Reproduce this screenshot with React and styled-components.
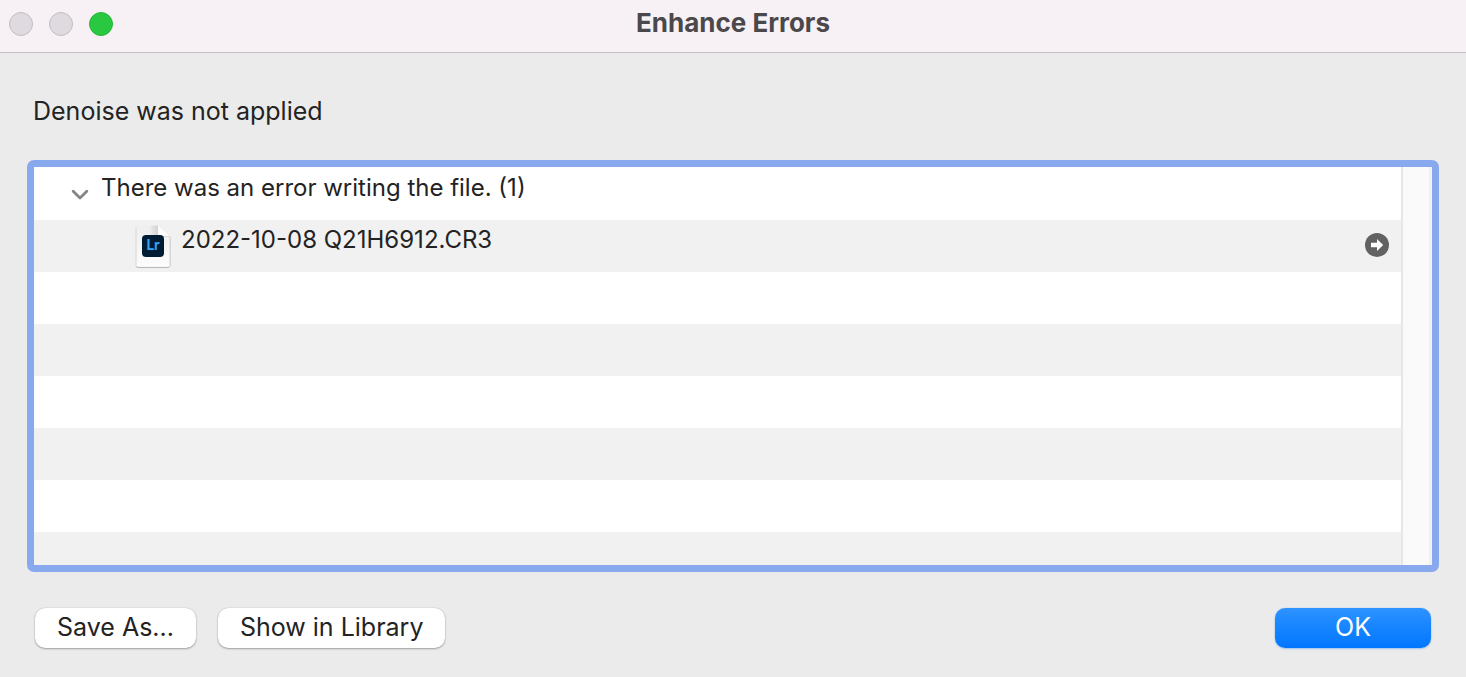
import { useState } from "react";
import styled, { createGlobalStyle } from "styled-components";

const STRIPES = 8;

const errorGroup = {
    message: "There was an error writing the file.",
    files: ["2022-10-08 Q21H6912.CR3"],
};

export default function App() {
    const [open, setOpen] = useState(true);
    const files = open ? errorGroup.files : [];
    const emptyRows = STRIPES - 1 - files.length;

    return (
        <>
            <GlobalStyle />
            <Dialog role="dialog" aria-labelledby="dialog-title">
                <TitleBar>
                    <Lights>
                        <Light type="button" aria-label="Close" disabled />
                        <Light type="button" aria-label="Minimize" disabled />
                        <Light type="button" aria-label="Zoom" $active />
                    </Lights>
                    <Title id="dialog-title">Enhance Errors</Title>
                </TitleBar>
                <Content>
                    <Message>Denoise was not applied</Message>
                    <ListBox>
                        <List>
                            <Row>
                                <Toggle
                                    type="button"
                                    aria-label="Toggle group"
                                    aria-expanded={open}
                                    onClick={() => setOpen(!open)}
                                >
                                    <Chevron $open={open} />
                                </Toggle>
                                <RowText>{errorGroup.message} ({errorGroup.files.length})</RowText>
                            </Row>
                            {files.map((name) => (
                                <FileRow key={name}>
                                    <FileIcon />
                                    <RowText>{name}</RowText>
                                    <Reveal type="button" aria-label="Show file">
                                        <ArrowIcon />
                                    </Reveal>
                                </FileRow>
                            ))}
                            {Array.from({ length: emptyRows }, (_, i) => (
                                <Row key={i} aria-hidden="true" />
                            ))}
                        </List>
                        <ScrollTrack />
                    </ListBox>
                    <Footer>
                        <Button type="button">Save As...</Button>
                        <Button type="button">Show in Library</Button>
                        <PrimaryButton type="button">OK</PrimaryButton>
                    </Footer>
                </Content>
            </Dialog>
        </>
    );
}

function Chevron({ $open }) {
    return (
        <ChevronSvg $open={$open} width="18" height="12" viewBox="0 0 18 12" aria-hidden="true">
            <path d="M2.2 2.2L9 9L15.8 2.2" fill="none" stroke="#858585" strokeWidth="2.8" strokeLinecap="round" strokeLinejoin="round" />
        </ChevronSvg>
    );
}

function FileIcon() {
    return (
        <FileSvg width="36" height="44" viewBox="0 0 36 44" aria-hidden="true">
            <defs>
                <linearGradient id="paper" x1="0" y1="0" x2="0" y2="1">
                    <stop offset="0" stopColor="#eeeeee" />
                    <stop offset="1" stopColor="#fcfcfc" />
                </linearGradient>
                <linearGradient id="shade" x1="0" y1="0" x2="1" y2="0">
                    <stop offset="0" stopColor="#d2d2d2" stopOpacity="0" />
                    <stop offset="1" stopColor="#d2d2d2" />
                </linearGradient>
            </defs>
            <path d="M1 41.5Q1 43.5 3 43.5H33Q35 43.5 35 41.5V13" fill="none" stroke="#b9b9b9" />
            <path d="M1 3Q1 1.5 3 1.5H23L35 12.5V40.5Q35 42.5 33 42.5H3Q1 42.5 1 40.5Z" fill="url(#paper)" />
            <path d="M1 4V41M35 13V41" stroke="#d6d6d6" strokeWidth="1" />
            <path d="M14 1.5H23V11H14Z" fill="url(#shade)" />
            <path d="M23 1.5L34.5 12.5H25Q23 12.5 23 10.5Z" fill="#fcfcfc" />
            <path d="M24 12.5H35" fill="none" stroke="#dadada" strokeWidth="1" />
            <rect x="7" y="11" width="22" height="22" rx="4" fill="#001c33" />
            <text x="18" y="26" textAnchor="middle" fontFamily="Lato, sans-serif" fontSize="15" fontWeight="700" fill="#35a5f8">Lr</text>
        </FileSvg>
    );
}

function ArrowIcon() {
    return (
        <svg width="24" height="24" viewBox="0 0 24 24" aria-hidden="true">
            <circle cx="12" cy="12" r="12" fill="#626262" />
            <path d="M6 9.8H12V6L18.2 12L12 18V14.2H6Z" fill="#ffffff" />
        </svg>
    );
}

const GlobalStyle = createGlobalStyle`
    * {
        box-sizing: border-box;
    }

    body {
        margin: 0;
        background-color: #ebebeb;
        color: #232323;
        font-family: Inter, "Liberation Sans", sans-serif;
    }

    button {
        padding: 0;
        border: 0;
        font-family: inherit;
    }
`;

const Dialog = styled.div`
    display: flex;
    flex-direction: column;
    height: 100vh;
    min-height: 400px;
`;

const TitleBar = styled.header`
    display: grid;
    grid-template-columns: 1fr auto 1fr;
    align-items: start;
    height: 53px;
    padding: 7px 9px 0;
    background-color: #f7f1f6;
    border-bottom: 1px solid #c6c1c5;
`;

const Lights = styled.div`
    display: flex;
    gap: 16px;
    padding-top: 5px;
`;

const Light = styled.button`
    width: 24px;
    height: 24px;
    border-radius: 50%;
    border: 1px solid ${props => props.$active ? "#25b83a" : "#c3bec2"};
    background-color: ${props => props.$active ? "#29c840" : "#dfdadf"};
`;

const Title = styled.h1`
    margin: 0;
    font-size: 26px;
    line-height: 32px;
    font-weight: 700;
    color: #4b484b;
`;

const Content = styled.main`
    display: flex;
    flex-direction: column;
    flex: 1;
    min-height: 0;
    padding: 42px 27px 29px;
`;

const Message = styled.p`
    margin: 0 6px 33px;
    font-size: 25px;
    line-height: 32px;
`;

const ListBox = styled.div`
    display: flex;
    flex: 1;
    min-height: 0;
    overflow: hidden;
    border: 7px solid #89a9ee;
    border-radius: 7px;
    background-color: #ffffff;
`;

const List = styled.ul`
    flex: 1;
    margin: 0;
    padding: 1px 0 0;
    list-style: none;
    overflow: hidden;
`;

const Row = styled.li`
    display: flex;
    align-items: flex-start;
    height: 52px;
    padding: 4px 12px 0 36px;

    &:nth-child(even) {
        background-color: #f1f1f1;
    }
`;

const FileRow = styled(Row)`
    padding-left: 101px;
`;

const RowText = styled.span`
    font-size: 24px;
    line-height: 32px;
`;

const Toggle = styled.button`
    display: flex;
    margin: 17px 12px 0 1px;
    background: none;
`;

const ChevronSvg = styled.svg`
    transform: rotate(${props => props.$open ? "0" : "-90deg"});
`;

const FileSvg = styled.svg`
    flex: none;
    margin-right: 10px;
`;

const Reveal = styled.button`
    display: flex;
    margin: 9px 0 0 auto;
    border-radius: 50%;
    background: none;
`;

const ScrollTrack = styled.div`
    width: 31px;
    border-left: 2px solid #e6e6e6;
    border-right: 3px solid #f1f1f1;
    background-color: #fafafa;
`;

const Footer = styled.footer`
    display: flex;
    gap: 22px;
    margin-top: 36px;
    padding: 0 8px;
`;

const Button = styled.button`
    height: 40px;
    padding: 0 22px 2px;
    border-radius: 10px;
    background-color: #ffffff;
    box-shadow: 0 0 1px rgba(0, 0, 0, 0.3), 0 1px 2px rgba(0, 0, 0, 0.3);
    color: #232323;
    font-size: 25px;
    line-height: 32px;
`;

const PrimaryButton = styled(Button)`
    width: 156px;
    margin-left: auto;
    background: linear-gradient(#2d93ff, #0076ff);
    box-shadow: 0 0 1px rgba(0, 122, 255, 0.4), 0 1px 2px rgba(0, 122, 255, 0.3);
    color: #ffffff;
`;
